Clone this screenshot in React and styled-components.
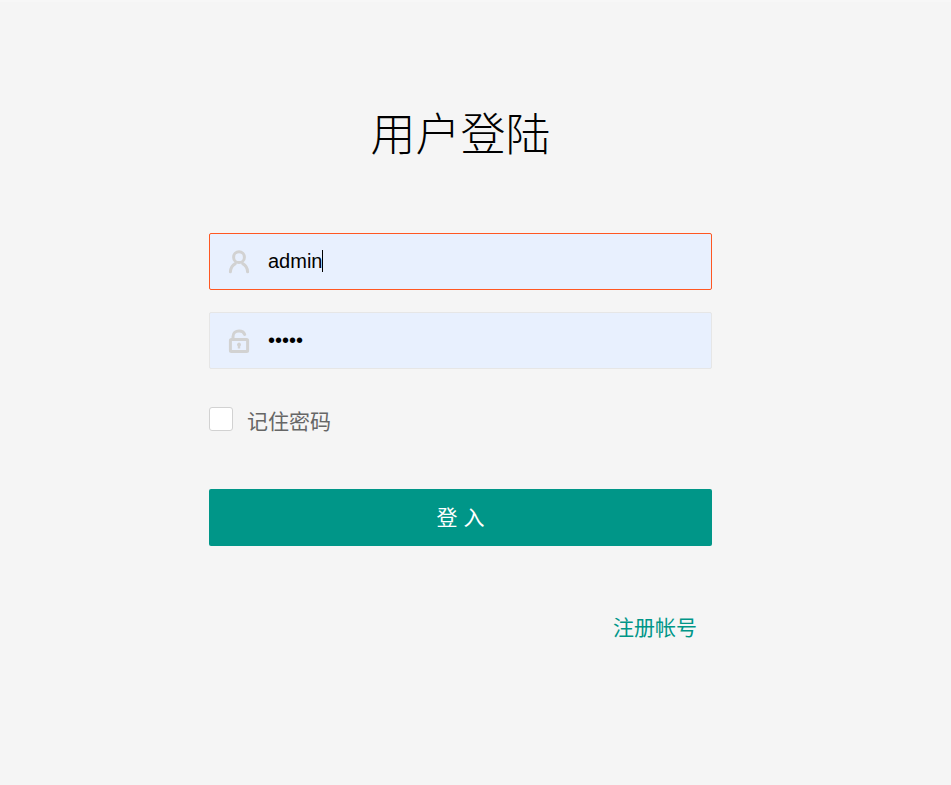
import React from "react";
import styled, { createGlobalStyle } from "styled-components";

const Global = createGlobalStyle`
  html, body { margin: 0; padding: 0; background: #f5f5f5; }
  body { font-family: "Liberation Sans", "Noto Sans CJK SC", sans-serif; }
`;

const Page = styled.div`
  width: 951px;
  height: 785px;
  box-sizing: border-box;
  border-top: 2px solid #f7f7f7;
  background: #f5f5f5;
  overflow: hidden;
`;

const Form = styled.form`
  width: 503px;
  margin: 0 0 0 209px;
  display: flex;
  flex-direction: column;
`;

const Title = styled.h1`
  margin: 102px 0 66px;
  height: 63px;
  line-height: 63px;
  font-size: 45px;
  font-weight: 300;
  text-align: center;
  color: #000;
`;

const Field = styled.div`
  height: 57px;
  box-sizing: border-box;
  margin-bottom: 22px;
  display: flex;
  align-items: center;
  gap: 18px;
  padding-left: 18px;
  background: #e8f0fe;
  border: 1px solid ${(p) => (p.$focused ? "#ff5722" : "#e6e6e6")};
  border-radius: 2px;
`;

const FieldIcon = styled.svg`
  width: 22px;
  height: 24px;
  flex: none;
  fill: none;
  stroke: #d2d2d2;
  stroke-width: 3;
  stroke-linecap: round;
  stroke-linejoin: round;
`;

const Keyhole = styled.path`
  fill: #d2d2d2;
  stroke: none;
`;

const Value = styled.span`
  font-size: 20px;
  line-height: 24px;
  color: #000;
  display: inline-flex;
  align-items: center;
  margin-top: -1px;
`;

const Caret = styled.i`
  display: inline-block;
  width: 1px;
  height: 22px;
  background: #000;
`;

const RememberRow = styled.label`
  display: flex;
  align-items: flex-start;
  gap: 14px;
  margin: 16px 0 57px;
  height: 25px;
`;

const CheckBox = styled.span`
  width: 24px;
  height: 24px;
  box-sizing: border-box;
  background: #fff;
  border: 1px solid #d2d2d2;
  border-radius: 3px;
`;

const RememberText = styled.span`
  font-size: 21px;
  line-height: 28px;
  color: #666;
  margin-top: 1px;
`;

const Submit = styled.button`
  height: 57px;
  padding: 0 0 4px;
  border: 0;
  border-radius: 2px;
  background: #009688;
  color: #fff;
  font-family: inherit;
  font-size: 21px;
  white-space: pre;
`;

const Links = styled.div`
  display: flex;
  justify-content: flex-end;
  margin-top: 68px;
  padding-right: 15px;
`;

const RegisterLink = styled.a`
  font-size: 21px;
  line-height: 28px;
  color: #009688;
  text-decoration: none;
`;

export default function App() {
  return (
    <Page>
      <Global />
      <Form onSubmit={(e) => e.preventDefault()}>
        <Title>用户登陆</Title>
        <Field $focused>
          <FieldIcon viewBox="0 0 22 24">
            <circle cx="11" cy="7.2" r="5.4" />
            <path d="M2.4 21.8C2.6 18 4.5 15.2 7.3 13.6" />
            <path d="M19.6 21.8C19.4 18 17.5 15.2 14.7 13.6" />
          </FieldIcon>
          <Value>admin<Caret /></Value>
        </Field>
        <Field>
          <FieldIcon viewBox="0 0 22 24">
            <rect x="2.4" y="10.5" width="17.2" height="12" rx="1" />
            <path d="M5 10V7.4C5 3.9 7.6 2 11 2c2.7 0 4.9 1.2 5.7 3.4" />
            <Keyhole d="M9 15.6a2 2 0 1 1 3.2 1.6V19.5h-2.4v-2.3A2 2 0 0 1 9 15.6z" />
          </FieldIcon>
          <Value>•••••</Value>
        </Field>
        <RememberRow>
          <CheckBox />
          <RememberText>记住密码</RememberText>
        </RememberRow>
        <Submit type="submit">登 入</Submit>
        <Links>
          <RegisterLink href="#">注册帐号</RegisterLink>
        </Links>
      </Form>
    </Page>
  );
}
